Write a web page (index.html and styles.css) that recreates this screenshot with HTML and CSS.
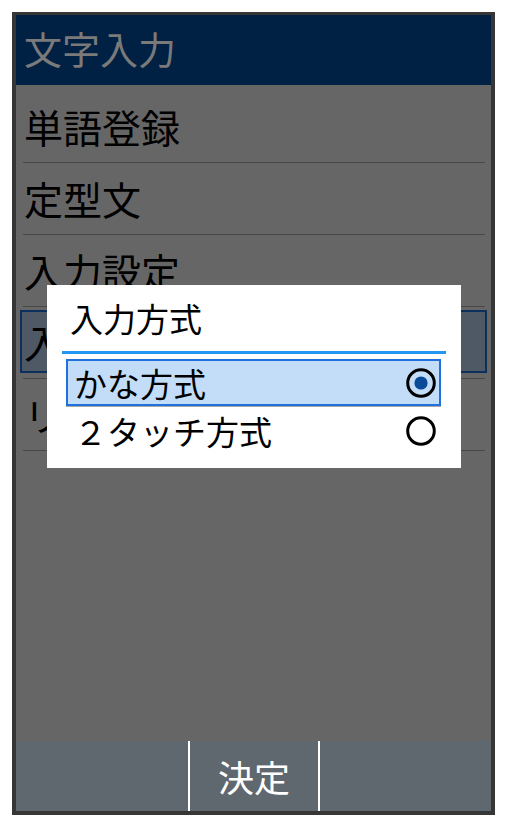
FILE: index.html
```html
<!DOCTYPE html>
<html lang="ja">
<head>
<meta charset="utf-8">
<link rel="stylesheet" href="styles.css">
</head>
<body>
<div class="frame">
  <div class="header">文字入力</div>
  <div class="list">
    <div class="row">単語登録</div>
    <div class="sep"></div>
    <div class="row">定型文</div>
    <div class="sep"></div>
    <div class="row">入力設定</div>
    <div class="sep"></div>
    <div class="row focused">入力方式</div>
    <div class="sep"></div>
    <div class="row">リセット</div>
    <div class="sep"></div>
  </div>
  <div class="softkeys">
    <div class="key"></div>
    <div class="key center">決定</div>
    <div class="key"></div>
  </div>
  <div class="dialog">
    <div class="dtitle">入力方式</div>
    <div class="dline"></div>
    <div class="options">
      <div class="opt selected">
        <span>かな方式</span>
        <svg class="radio" width="30" height="30" viewBox="0 0 30 30"><circle cx="15" cy="15" r="13.3" fill="none" stroke="#000" stroke-width="3"/><circle cx="15" cy="15" r="6.6" fill="#0b4a98"/></svg>
      </div>
      <div class="optsep"></div>
      <div class="opt">
        <span>２タッチ方式</span>
        <svg class="radio" width="30" height="30" viewBox="0 0 30 30"><circle cx="15" cy="15" r="13.3" fill="none" stroke="#000" stroke-width="3"/></svg>
      </div>
    </div>
  </div>
</div>
</body>
</html>
```

FILE: styles.css
```css
html, body {
  margin: 0;
  padding: 0;
  background: #ffffff;
}
body {
  font-family: "Noto Sans CJK JP", "Noto Sans", sans-serif;
}
.frame {
  position: relative;
  box-sizing: border-box;
  margin: 12px 0 0 12px;
  width: 483px;
  height: 803px;
  border: 4px solid #363636;
  border-top-width: 3px;
  background: #666666;
  display: flex;
  flex-direction: column;
}
.header {
  height: 70px;
  flex: none;
  background: #002143;
  color: #7a7a7a;
  font-size: 38px;
  line-height: 70px;
  padding-left: 8px;
  padding-bottom: 4px;
  box-sizing: border-box;
  display: flex;
  align-items: center;
}
.list {
  flex: 1;
  padding-top: 6px;
}
.row {
  height: 71px;
  box-sizing: border-box;
  display: flex;
  align-items: center;
  padding-left: 8px;
  padding-bottom: 2px;
  font-size: 39px;
  color: #000;
  white-space: nowrap;
  overflow: hidden;
}
.row.focused {
  height: 63px;
  margin: 3px 4px 5px 4px;
  border: 2px solid #0d2f5c;
  background: #4e5965;
  padding-left: 2px;
}
.sep {
  height: 1px;
  background: #474747;
  margin: 0 6px 0 7px;
}
.softkeys {
  height: 70px;
  flex: none;
  background: #5f676f;
  display: flex;
}
.key {
  flex: none;
  width: 172px;
}
.key.center {
  width: 128px;
  border-left: 2px solid #fff;
  border-right: 2px solid #fff;
  color: #fff;
  font-size: 36px;
  display: flex;
  align-items: center;
  justify-content: center;
}
.key:last-child {
  flex: 1;
}
.dialog {
  position: absolute;
  left: 31px;
  top: 270px;
  width: 414px;
  height: 183px;
  background: #fff;
}
.dtitle {
  height: 66px;
  box-sizing: border-box;
  display: flex;
  align-items: center;
  padding-left: 23px;
  font-size: 33px;
  color: #000;
}
.dline {
  height: 3px;
  background: #2196f3;
  margin: 0 15px;
}
.options {
  padding: 5px 20px 0 19px;
}
.opt {
  height: 48px;
  box-sizing: border-box;
  display: flex;
  align-items: center;
  justify-content: space-between;
  padding: 0 5px 0 8px;
  font-size: 33px;
  color: #000;
}
.opt.selected {
  height: 47px;
  border: 2px solid #1f72dc;
  background: #c3ddf8;
  padding: 0 3px 0 6px;
}
.optsep {
  height: 1px;
  background: #a8a8a8;
}
.radio {
  display: block;
}
```
